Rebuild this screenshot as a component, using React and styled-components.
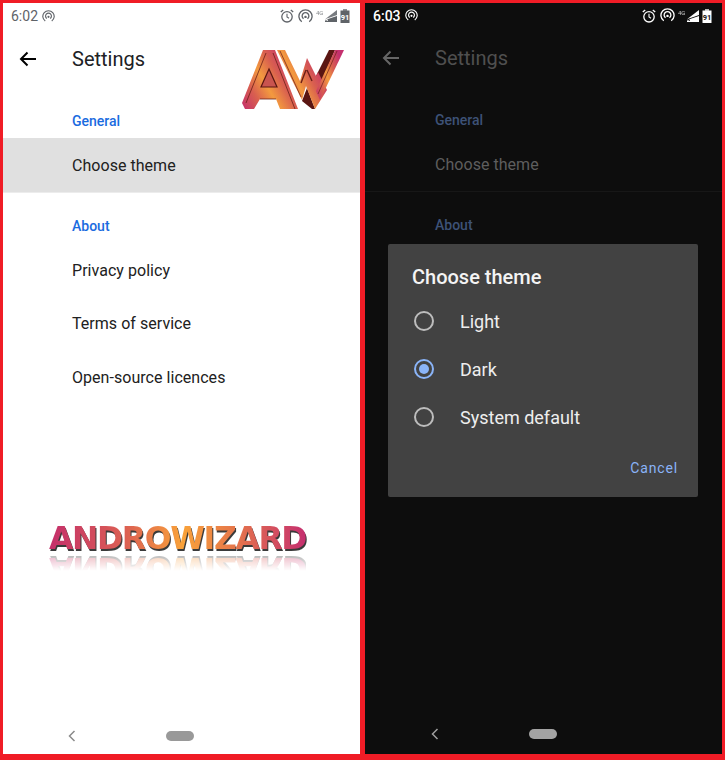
import React from "react";
import styled, { createGlobalStyle } from "styled-components";

const Global = createGlobalStyle`
  html, body { margin: 0; padding: 0; background: #f01c26; }
  body { font-family: Roboto, "Liberation Sans", sans-serif; }
`;

const Page = styled.div`
  width: 725px;
  height: 760px;
  box-sizing: border-box;
  padding: 3px 3px 0;
  display: flex;
  gap: 5px;
  background: #f01c26;
  overflow: hidden;
`;

const Panel = styled.section`
  position: relative;
  width: 357px;
  height: 751px;
  display: flex;
  flex-direction: column;
  overflow: hidden;
  background: ${(p) => (p.$dark ? "#0d0d0d" : "#ffffff")};
`;

const StatusBar = styled.div`
  height: ${(p) => (p.$dark ? 25 : 26)}px;
  flex: none;
  display: flex;
  align-items: center;
  padding: 0 10px 0 8px;
  color: ${(p) => (p.$dark ? "#ffffff" : "#5f6368")};
`;

const Clock = styled.span`
  font-size: 14px;
  font-weight: ${(p) => (p.$dark ? 500 : 400)};
  margin-right: 4px;
`;

const StatusRight = styled.div`
  margin-left: auto;
  display: flex;
  align-items: center;
`;

const Toolbar = styled.header`
  height: 60px;
  flex: none;
  display: flex;
  align-items: center;
  padding-left: ${(p) => (p.$dark ? 16 : 15)}px;
  color: ${(p) => (p.$dark ? "#4f4f4f" : "#202124")};
`;

const BackSlot = styled.span`
  width: 54px;
  display: flex;
  color: ${(p) => (p.$dark ? "#666666" : "#000000")};
`;

const Title = styled.h1`
  margin: 0;
  font-size: 20px;
  font-weight: 400;
`;

const SectionLabel = styled.div`
  padding: ${(p) => (p.$first ? "24px 0 9px" : "25px 0 9.5px")} ${(p) => (p.$dark ? 70 : 69)}px;
  font-size: 14px;
  line-height: 16px;
  font-weight: 500;
  color: ${(p) => (p.$dark ? "#3d5277" : "#1a6be0")};
`;

const Row = styled.div`
  height: ${(p) => (p.$tall ? 54 : 53.5)}px;
  display: flex;
  align-items: center;
  padding-left: ${(p) => (p.$dark ? 70 : 69)}px;
  font-size: 16px;
  letter-spacing: 0.04px;
  color: ${(p) => (p.$dark ? "#5e5e5e" : "#212121")};
  background: ${(p) => (p.$selected && !p.$dark ? "#e0e0e0" : "transparent")};
`;

const Divider = styled.div`
  height: 1px;
  background: ${(p) => (p.$dark ? "#171717" : "#ececec")};
`;

const NavBar = styled.nav`
  margin-top: auto;
  height: 36px;
  flex: none;
  box-sizing: content-box;
  padding-bottom: ${(p) => (p.$dark ? 2 : 0)}px;
  display: grid;
  grid-template-columns: 1fr auto 1fr;
  align-items: center;
`;

const NavBack = styled.svg`
  display: block;
  margin-left: ${(p) => (p.$dark ? 66 : 65)}px;
  color: ${(p) => (p.$dark ? "#9e9e9e" : "#8a8a8a")};
`;

const HomePill = styled.span`
  width: 28px;
  height: 10px;
  border-radius: 5px;
  margin-left: ${(p) => (p.$dark ? -1 : -3)}px;
  background: ${(p) => (p.$dark ? "#a3a3a3" : "#999999")};
`;

const AwLogo = styled.svg`
  position: absolute;
  left: 236px;
  top: 44px;
`;

const WordLogo = styled.div`
  position: absolute;
  left: 46px;
  top: 517px;
  font-family: "DejaVu Sans", sans-serif;
  font-weight: 700;
  font-size: 31.5px;
  line-height: 36px;
  letter-spacing: -1.35px;
  white-space: nowrap;
  color: transparent;
  background: linear-gradient(90deg, #c42f6b 0%, #dc6052 30%, #f9a23a 52%, #e6774a 72%, #c52f6f 100%);
  -webkit-background-clip: text;
  background-clip: text;
  filter: drop-shadow(1px 2px 0 #3a3a3a);
  -webkit-box-reflect: below -5px linear-gradient(transparent 45%, rgba(255, 255, 255, 0.45));
`;

const Dialog = styled.div`
  position: absolute;
  left: 23px;
  top: 241px;
  width: 310px;
  height: 253px;
  box-sizing: border-box;
  padding: 21px 20px 0 24px;
  background: #424242;
  border-radius: 2px;
  display: flex;
  flex-direction: column;
`;

const DialogTitle = styled.h2`
  margin: 0 0 8px;
  font-size: 20px;
  line-height: 24px;
  font-weight: 500;
  color: #f4f4f4;
`;

const Option = styled.div`
  height: 48px;
  display: flex;
  align-items: center;
  gap: 26px;
  padding-left: 2px;
  font-size: 18px;
  color: #eeeeee;
`;

const Radio = styled.span`
  width: 20px;
  height: 20px;
  flex: none;
  box-sizing: border-box;
  border-radius: 50%;
  border: 2px solid ${(p) => (p.$on ? "#8ab4f8" : "#bdbdbd")};
  display: flex;
  align-items: center;
  justify-content: center;
  &::after {
    content: "";
    width: 10px;
    height: 10px;
    border-radius: 50%;
    background: ${(p) => (p.$on ? "#8ab4f8" : "transparent")};
  }
`;

const DialogActions = styled.div`
  margin-top: auto;
  padding-bottom: 20px;
  display: flex;
  justify-content: flex-end;
`;

const CancelButton = styled.span`
  font-size: 14px;
  line-height: 18px;
  font-weight: 400;
  letter-spacing: 0.85px;
  color: #8ab4f8;
`;

const Gap = styled.span`
  width: ${(p) => p.$w}px;
`;

const Hotspot = ({ size = 15 }) => (
  <svg width={size} height={size} viewBox="0 0 16 16" fill="none" stroke="currentColor" strokeWidth="1.4">
    <path d="M4 13.6 A7 7 0 1 1 12 13.6" />
    <path d="M5.9 10.4 A3.6 3.6 0 1 1 10.1 10.4" />
    <circle cx="8" cy="8.4" r="1.3" fill="currentColor" stroke="none" />
  </svg>
);

const Alarm = () => (
  <svg width="14" height="14" viewBox="0 0 14 14" fill="none" stroke="currentColor" strokeWidth="1.3">
    <circle cx="7" cy="7.8" r="5.2" />
    <path d="M7 4.8 V8 L9 9.2" strokeWidth="1.1" />
    <path d="M0.8 3 L3.2 0.9 M13.2 3 L10.8 0.9" />
  </svg>
);

const Signal = ({ dark }) => (
  <svg width="22" height="14" viewBox="0 0 22 14" fill="currentColor">
    <text x="0" y="5.5" fontSize="6" fontFamily="Roboto, sans-serif" opacity="0.75">4G</text>
    <path d="M21 1 V6 L9 10.2 Z" opacity={dark ? 1 : 0.85} />
    <path d="M21 7 V13 H9 V11 Z" />
    <path d="M9.5 9.5 L12 12 M12 9.5 L9.5 12" stroke={dark ? "#0d0d0d" : "#ffffff"} strokeWidth="0.8" />
  </svg>
);

const BatteryIcon = styled.svg`
  margin-left: 2px;
`;

const Battery = ({ dark }) => (
  <BatteryIcon width="10" height="14" viewBox="0 0 10 14">
    <rect x="3" y="0" width="4" height="2" fill="currentColor" opacity="0.7" />
    <rect x="0.5" y="1.5" width="9" height="12.5" fill="currentColor" />
    <text x="5" y="11" textAnchor="middle" fontSize="7.5" fontWeight="700" fontFamily="Roboto, sans-serif" fill={dark ? "#111111" : "#ffffff"}>91</text>
  </BatteryIcon>
);

const ArrowBack = () => (
  <svg width="20" height="20" viewBox="0 0 20 20" fill="none" stroke="currentColor" strokeWidth="2">
    <path d="M18 10 H3 M9.5 3.5 L3 10 L9.5 16.5" />
  </svg>
);

const AwMark = () => (
  <AwLogo width="106" height="66" viewBox="-3 -3 106 66" aria-hidden="true">
    <defs>
      <linearGradient id="aw" x1="0" y1="1" x2="1" y2="0.4">
        <stop offset="0" stopColor="#c42f6c" />
        <stop offset="0.28" stopColor="#d9604f" />
        <stop offset="0.5" stopColor="#f39a3f" />
        <stop offset="0.72" stopColor="#d9604f" />
        <stop offset="1" stopColor="#c4306e" />
      </linearGradient>
    </defs>
    <path d="M74 26 L87 0 L93 0 L79 33 Z" fill="#5a1612" />
    <path d="M60 51 L65 38 L73 59 L70 59 Z" fill="#5a1612" />
    <path d="M21 0 L33 0 L56 59 L38 59 L34 49 L18 49 L12 59 L3 59 L0 53 Z" fill="url(#aw)" />
    <path d="M27 19 L19 37 L35 37 Z" fill="#c9544f" stroke="#5a1612" strokeWidth="1.2" />
    <path d="M24 3 L4 53 M31 3 L53 59 M18 49 H34" stroke="#6b1f18" strokeWidth="0.8" fill="none" />
    <path d="M35 0 L43 0 L58 31 L65 8 L74 26 L76 22 L85 40 L73 59 L64 36 L60 50 Z" fill="url(#aw)" />
    <path d="M93 0 L102 0 L78 50 L74 41 Z" fill="url(#aw)" />
    <path d="M64 20 L59 33 M65 20 L70 31" stroke="#6b1f18" strokeWidth="1.4" fill="none" />
    <path d="M38 1 L59 47 M95 1 L76 44" stroke="#6b1f18" strokeWidth="0.7" fill="none" />
  </AwLogo>
);

const Phone = ({ dark, time, children }) => (
  <Panel $dark={dark}>
    <StatusBar $dark={dark}>
      <Clock $dark={dark}>{time}</Clock>
      <Hotspot size={13} />
      <StatusRight>
        <Alarm />
        <Gap $w={4} />
        <Hotspot />
        <Gap $w={3} />
        <Signal dark={dark} />
        <Battery dark={dark} />
      </StatusRight>
    </StatusBar>
    <Toolbar $dark={dark}>
      <BackSlot $dark={dark}><ArrowBack /></BackSlot>
      <Title>Settings</Title>
    </Toolbar>
    <SectionLabel $first $dark={dark}>General</SectionLabel>
    <Row $tall $selected $dark={dark}>Choose theme</Row>
    <Divider $dark={dark} />
    <SectionLabel $dark={dark}>About</SectionLabel>
    {!dark && (
      <>
        <Row>Privacy policy</Row>
        <Row>Terms of service</Row>
        <Row>Open-source licences</Row>
      </>
    )}
    <NavBar $dark={dark}>
      <NavBack $dark={dark} width="8" height="12" viewBox="0 0 8 12" fill="none" stroke="currentColor" strokeWidth="1.5">
        <path d="M6.5 1 L1.5 6 L6.5 11" />
      </NavBack>
      <HomePill $dark={dark} />
      <span />
    </NavBar>
    {children}
  </Panel>
);

export default function App() {
  return (
    <>
      <Global />
      <Page>
        <Phone time="6:02">
          <AwMark />
          <WordLogo>ANDROWIZARD</WordLogo>
        </Phone>
        <Phone dark time="6:03">
          <Dialog>
            <DialogTitle>Choose theme</DialogTitle>
            <Option><Radio />Light</Option>
            <Option><Radio $on />Dark</Option>
            <Option><Radio />System default</Option>
            <DialogActions><CancelButton>Cancel</CancelButton></DialogActions>
          </Dialog>
        </Phone>
      </Page>
    </>
  );
}
